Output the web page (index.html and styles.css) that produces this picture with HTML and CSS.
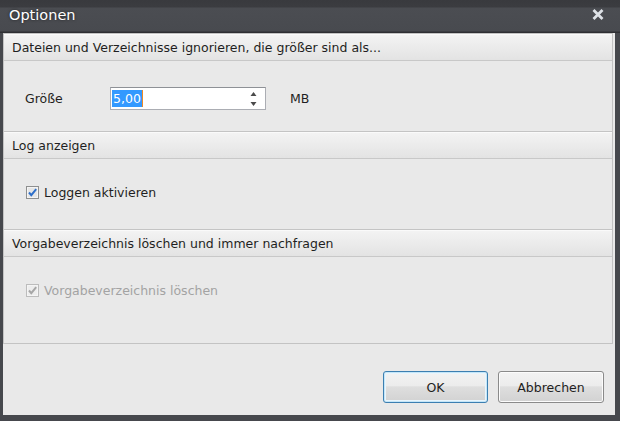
FILE: index.html
```html
<!DOCTYPE html>
<html lang="de">
<head>
<meta charset="utf-8">
<title>Optionen</title>
<link rel="stylesheet" href="styles.css">
</head>
<body>
<div class="window">
  <div class="titlebar">
    <span class="title">Optionen</span>
    <span class="close" aria-label="Schließen">
      <svg width="12" height="11" viewBox="0 0 12 11"><path d="M1.5 1 L10.5 10 M10.5 1 L1.5 10" stroke="#dde1e6" stroke-width="2.8" fill="none"/></svg>
    </span>
  </div>
  <div class="client">
    <div class="panel">
      <section class="group">
        <div class="group-header">Dateien und Verzeichnisse ignorieren, die größer sind als...</div>
        <div class="group-body size-row">
          <span class="field-label">Größe</span>
          <div class="spin">
            <span class="spin-value"><span class="selected">5,00</span><span class="caret"></span></span>
            <span class="spin-arrows">
              <svg width="7" height="16" viewBox="0 0 7 16"><path d="M3.5 1 L6.5 5 L0.5 5 Z M0.5 11 L6.5 11 L3.5 15 Z" fill="#4a4a4a"/></svg>
            </span>
          </div>
          <span class="unit">MB</span>
        </div>
      </section>
      <section class="group">
        <div class="group-header">Log anzeigen</div>
        <div class="group-body check-row">
          <span class="checkbox">
            <svg width="13" height="13" viewBox="0 0 13 13"><rect x="0.5" y="0.5" width="12" height="12" fill="#f4f4f4" stroke="#8e8f8f"/><rect x="2" y="2" width="9" height="9" fill="#e6e6e6"/><path d="M3 6.5 L5.3 9.2 L10.2 3.2" stroke="#2e6fc9" stroke-width="2" fill="none"/></svg>
          </span>
          <span class="check-label">Loggen aktivieren</span>
        </div>
      </section>
      <section class="group last">
        <div class="group-header">Vorgabeverzeichnis löschen und immer nachfragen</div>
        <div class="group-body check-row disabled">
          <span class="checkbox">
            <svg width="13" height="13" viewBox="0 0 13 13"><rect x="0.5" y="0.5" width="12" height="12" fill="#f4f4f4" stroke="#bcbcbc"/><rect x="2" y="2" width="9" height="9" fill="#ededed"/><path d="M3 6.5 L5.3 9.2 L10.2 3.2" stroke="#a6a6a6" stroke-width="2" fill="none"/></svg>
          </span>
          <span class="check-label">Vorgabeverzeichnis löschen</span>
        </div>
      </section>
    </div>
    <div class="footer">
      <button class="btn default">OK</button>
      <button class="btn">Abbrechen</button>
    </div>
  </div>
</div>
</body>
</html>
```

FILE: styles.css
```css
* { box-sizing: border-box; }
html, body { margin: 0; padding: 0; }
body {
  font-family: "DejaVu Sans", sans-serif;
  font-size: 12.5px;
  color: #1f1f22;
}
.window {
  width: 620px;
  height: 421px;
  background: #46484d;
  display: flex;
  flex-direction: column;
}
.titlebar {
  height: 33px;
  flex: none;
  display: flex;
  justify-content: space-between;
  align-items: flex-start;
  padding: 6px 16px 0 9px;
  background: linear-gradient(#393a3e 0, #3b3c40 7px, #4b4d52 8px, #484a4f 31px, #2e2f33 32px);
}
.title {
  color: #ffffff;
  font-size: 14.5px;
  line-height: 18px;
  text-shadow: 0 0 3px rgba(0, 0, 0, 0.6);
}
.close { display: flex; padding-top: 3px; }
.client {
  flex: 1;
  margin: 0 5px 6px 3px;
  background: #e9e9e9;
  display: flex;
  flex-direction: column;
}
.panel {
  height: 311px;
  margin-right: 2px;
  border: 1px solid #c3c3c3;
  display: flex;
  flex-direction: column;
}
.group { display: flex; flex-direction: column; }
.group.last { flex: 1; }
.group-header {
  height: 27px;
  border-top: 1px solid #fafafa;
  border-bottom: 1px solid #c8c8c8;
  background: linear-gradient(#f3f3f3, #e3e3e3);
  padding-left: 8px;
  line-height: 25px;
  white-space: nowrap;
}
.group-body {
  height: 71px;
  border-bottom: 1px solid #c4c4c4;
  padding: 26px 0 0 21px;
  display: flex;
  align-items: flex-start;
}
.group.last .group-body { flex: 1; border-bottom: none; height: auto; }
.size-row { align-items: flex-start; }
.field-label { width: 85px; line-height: 23px; }
.spin {
  width: 156px;
  height: 23px;
  background: #ffffff;
  border: 1px solid #abadb3;
  border-top-color: #8e9196;
  display: flex;
  align-items: center;
  justify-content: space-between;
  padding: 0 8px 0 1px;
}
.spin-value { display: flex; align-items: center; height: 17px; }
.selected {
  background: #3399ff;
  color: #ffffff;
  line-height: 17px;
  padding: 0 1px 0 1px;
}
.caret { width: 1px; height: 17px; background: #f08a24; }
.spin-arrows { display: flex; }
.unit { margin-left: 24px; line-height: 23px; }
.check-row { padding-top: 27px; padding-left: 22px; align-items: flex-start; }
.checkbox { display: flex; width: 13px; height: 13px; }
.check-label { margin-left: 5px; line-height: 13px; }
.disabled .check-label { color: #a3a3a3; }
.footer {
  flex: 1;
  display: flex;
  justify-content: flex-end;
  align-items: flex-start;
  gap: 10px;
  padding: 27px 11px 0 0;
}
.btn {
  font-family: "DejaVu Sans", sans-serif;
  font-size: 12.5px;
  color: #1f1f22;
  width: 106px;
  height: 32px;
  border: 1px solid #8a8a8a;
  border-radius: 3px;
  background: linear-gradient(#f3f3f3 0%, #ececec 45%, #dedede 50%, #d2d2d2 100%);
  box-shadow: inset 0 0 0 1px #fcfcfc;
  padding: 0;
}
.btn.default {
  width: 105px;
  border-color: #3c7fb1;
  box-shadow: inset 0 0 0 1px #c5e6f8, inset 0 0 0 2px #e9f5fc;
}
```
